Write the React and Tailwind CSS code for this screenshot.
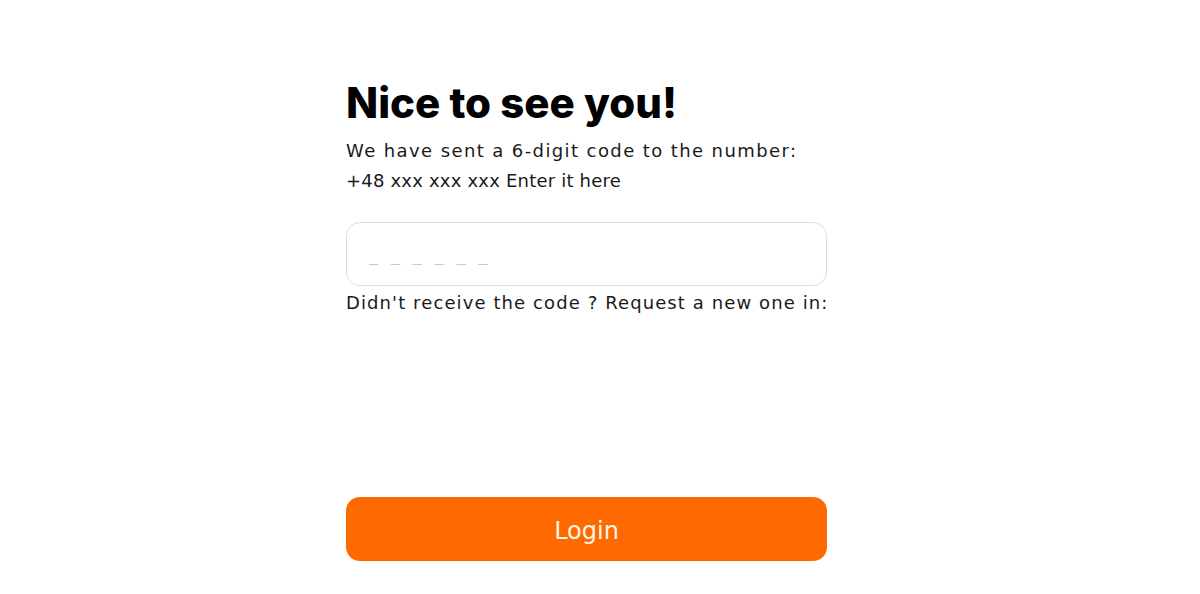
import React, { useState } from "react";

const App = () => {
  const [code, setCode] = useState("");

  return (
    <div
      className="min-h-[594px] w-full bg-white flex pl-[346px]"
      style={{ fontFamily: "'DejaVu Sans', Inter, sans-serif" }}
    >
      <div className="w-[481px] pt-[76px] flex flex-col">
        <h1
          className="text-[42px] font-extrabold text-black leading-[54px]"
          style={{ fontFamily: "Inter, sans-serif" }}
        >
          Nice to see you!
        </h1>
        <p className="mt-[6px] text-[18px] text-[#1a1a1a] leading-[30px]">
          <span className="block tracking-[1.4px]">
            We have sent a 6-digit code to the number:
          </span>
          <span className="block tracking-[0.2px]">
            +48 xxx xxx xxx Enter it here
          </span>
        </p>
        <input
          value={code}
          onChange={(e) => setCode(e.target.value)}
          placeholder="_ _ _ _ _ _"
          className="mt-[26px] h-[64px] w-full rounded-[14px] border border-[#dcdcdc] px-[22px] text-[18px] tracking-[3.6px] outline-none placeholder:text-[#c8c8c8]"
        />
        <p className="mt-[2px] text-[18px] tracking-[1.1px] text-[#1a1a1a] leading-[30px] whitespace-nowrap">
          Didn't receive the code ? Request a new one in:
        </p>
        <button className="mt-[179px] h-[64px] w-full rounded-[14px] bg-[#ff6a00] text-[#fdf4ec] text-[24px] font-medium pt-[3px]">
          Login
        </button>
      </div>
    </div>
  );
};

export default App;
